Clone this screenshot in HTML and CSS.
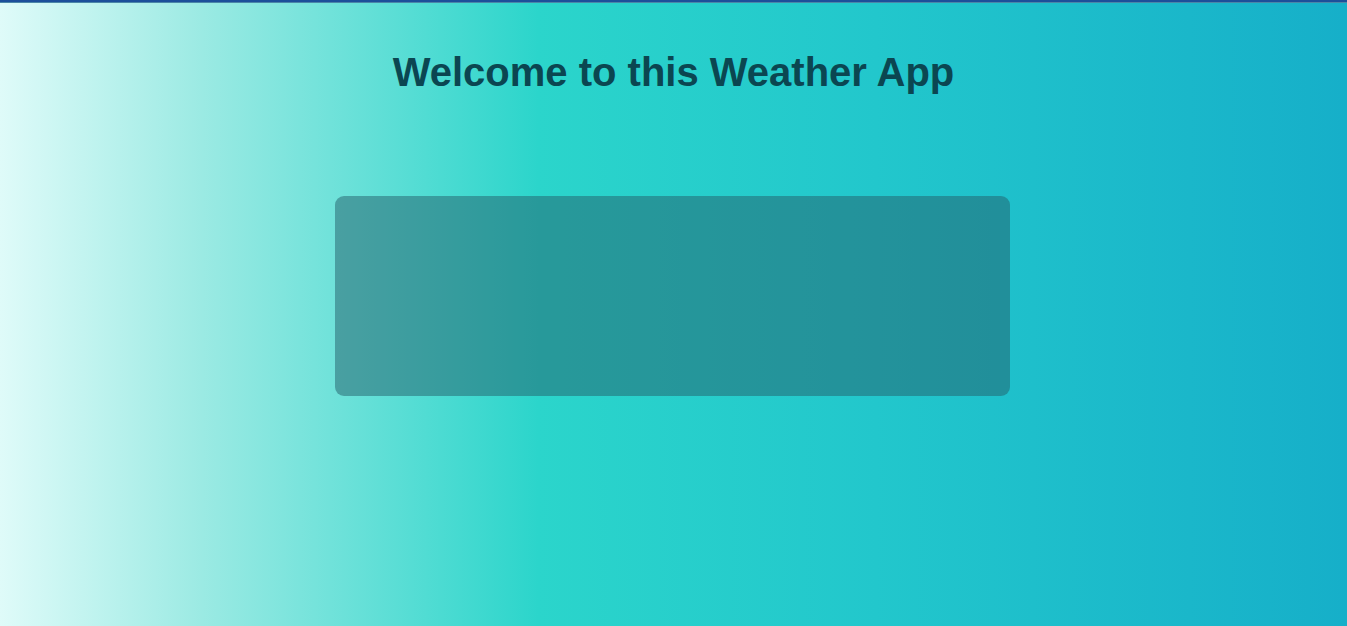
FILE: index.html
```html
<!DOCTYPE html>
<html lang="en">
<head>
<meta charset="utf-8">
<title>Weather App</title>
<link rel="stylesheet" href="styles.css">
</head>
<body>
<main class="page">
  <h1 class="title">Welcome to this Weather App</h1>
  <section class="card"></section>
</main>
</body>
</html>
```
FILE: styles.css
```css
html, body {
  margin: 0;
  padding: 0;
  height: 100%;
}
body {
  font-family: "Liberation Sans", Arial, sans-serif;
  background: linear-gradient(to right, #dffbf9 0%, #9beae3 15%, #2bd5cb 40%, #22c7cc 65%, #16afc9 100%);
  border-top: 2px solid #1c4f9a;
  box-sizing: border-box;
  min-height: 626px;
}
.page {
  display: flex;
  flex-direction: column;
  align-items: center;
  border-top: 1px solid #4b86a8;
}
.title {
  margin: 47px 0 0;
  font-size: 40px;
  font-weight: 700;
  color: #0b4651;
  line-height: normal;
}
.card {
  margin-top: 101px;
  margin-right: 2px;
  width: 675px;
  height: 200px;
  border-radius: 9px;
  background: rgba(36, 94, 105, 0.5);
}
```
